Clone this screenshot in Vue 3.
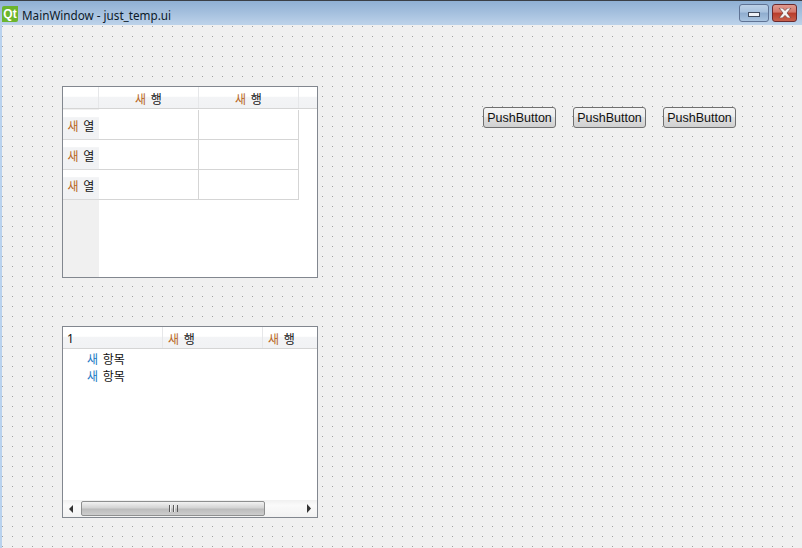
<template>
  <div class="window">
    <header class="titlebar">
      <div class="qt-logo">Qt</div>
      <span class="title">MainWindow - just_temp.ui</span>
      <div class="caption-buttons">
        <button class="cap cap-min"><i class="min-glyph"></i></button>
        <button class="cap cap-close">
          <svg width="14" height="10" viewBox="0 0 14 10">
            <path d="M1 0h3.500L7 2.600 9.500 0H13L9 5l4 5H9.500L7 7.400 4.500 10H1l4-5z" fill="#f4f4f4" stroke="#6b3a36" stroke-width="0.7" />
          </svg>
        </button>
      </div>
    </header>

    <main class="canvas">
      <!-- 表格 -->
      <section class="widget table-widget">
        <div class="hhead">
          <div class="corner"></div>
          <div v-for="c in columns" :key="c.id" class="hsec col"><b>새</b> 행</div>
          <div class="hsec fill"></div>
        </div>
        <div class="table-body">
          <div class="vhead">
            <div v-for="r in rows" :key="r" class="vsec"><b>새</b> 열</div>
          </div>
          <div class="cells">
            <div v-for="r in rows" :key="r" class="row">
              <div class="cell"></div>
              <div class="cell"></div>
            </div>
          </div>
        </div>
      </section>

      <!-- 树 -->
      <section class="widget tree-widget">
        <div class="hhead tree-head">
          <div class="hsec tree-first">1</div>
          <div class="hsec tree-col"><b>새</b> 행</div>
          <div class="hsec tree-last"><b>새</b> 행</div>
        </div>
        <div class="tree-items">
          <div v-for="n in 2" :key="n" class="tree-item"><b class="blue">새</b> 항목</div>
        </div>
        <div class="scrollbar">
          <div class="arrow-box arrow-left">
            <svg width="4" height="8" viewBox="0 0 4 8"><path d="M4 0v8L0 4z" fill="#333" /></svg>
          </div>
          <div class="thumb">
            <svg width="9" height="7" viewBox="0 0 9 7"><path d="M0 0h1v7H0zM4 0h1v7H4zM8 0h1v7H8z" fill="#5a5a5a" /><path d="M1 0h1v7H1zM5 0h1v7H5z" fill="#eeeeee" /></svg>
          </div>
          <div class="track"></div>
          <div class="arrow-box">
            <svg width="5" height="9" viewBox="0 0 5 9"><path d="M1 0v9l4-4.500z" fill="#333" /></svg>
          </div>
        </div>
      </section>

      <div class="buttons">
        <button v-for="b in 3" :key="b" class="push">PushButton</button>
      </div>
    </main>
  </div>
</template>

<script setup>
const columns = [{ id: 1 }, { id: 2 }];
const rows = [1, 2, 3];
</script>

<style>
html, body { margin: 0; overflow: hidden; }
</style>

<style scoped>
.window {
  width: 802px;
  height: 548px;
  display: flex;
  flex-direction: column;
  overflow: hidden;
  font-family: "Noto Sans CJK KR", "Noto Sans", sans-serif;
  font-size: 12px;
  word-spacing: 2px;
  color: #111;
}

.titlebar {
  height: 25px;
  flex: none;
  box-sizing: border-box;
  border-top: 1px solid #3a3f46;
  padding-left: 2px;
  display: flex;
  align-items: center;
  background: linear-gradient(#8fb0d4, #a5c0de 50%, #bdd3ea);
}
.qt-logo {
  width: 16px;
  height: 16px;
  margin-top: 1px;
  border-radius: 2px 0 2px 0;
  background: #6cb52d;
  color: #fff;
  font: bold 12px/16px "Liberation Sans", sans-serif;
  text-align: center;
}
.title {
  margin-left: 4px;
  margin-top: 3px;
  font: 11.7px/16px "Noto Sans", sans-serif;
  word-spacing: 0;
  color: #0c1a2a;
}
.caption-buttons {
  margin-left: auto;
  margin-right: 5px;
  margin-top: -1px;
  display: flex;
  gap: 3px;
}
.cap {
  padding: 0;
  height: 18px;
  border-radius: 3px;
  display: flex;
  align-items: center;
  justify-content: center;
}
.cap-min {
  width: 30px;
  border: 1px solid #5f7394;
  background: linear-gradient(#bcd0e6, #a8c2de 45%, #8eacce 50%, #a9c4e0);
}
.min-glyph {
  display: block;
  width: 10px;
  height: 3px;
  margin-top: 4px;
  background: #eef2f7;
  border: 1px solid #3f4a5c;
}
.cap-close {
  width: 25px;
  border: 1px solid #6a2a2e;
  background: linear-gradient(#e09a8e, #d4766a 45%, #b83c2a 50%, #c8604c);
}

.canvas {
  position: relative;
  flex: 1;
  border-left: 2px solid #b9d2ee;
  background-color: #f0f0f0;
  background-image: conic-gradient(from 270deg at 1px 1px, #a0a0a0 90deg, transparent 0);
  background-size: 10px 10px;
  background-position: 0 1px;
}

/* designer form: widgets sit on a free canvas */
.widget {
  position: absolute;
  left: 60px;
  width: 256px;
  height: 192px;
  box-sizing: border-box;
  border: 1px solid #82878f;
  background: #fff;
  display: flex;
  flex-direction: column;
}
.table-widget { top: 61px; }
.tree-widget { top: 301px; }

.hhead {
  display: flex;
  height: 22px;
  flex: none;
  box-sizing: border-box;
  border-bottom: 1px solid #d5d5d5;
  background: linear-gradient(#fff 45%, #f3f4f6 46%, #f1f2f4);
}
.hsec {
  box-sizing: border-box;
  border-right: 1px solid #e6e7e9;
  text-align: center;
  line-height: 23px;
}
.hsec b, .vsec b, .tree-item b {
  font-weight: 400;
  color: #b8661c;
}
.tree-item b.blue { color: #1c78c4; }
.corner {
  width: 36px;
  border-right: 1px solid #e6e7e9;
  box-sizing: border-box;
}
.col { width: 100px; }
.fill { flex: 1; border-right: 0; }

.table-body { flex: 1; display: flex; min-height: 0; }
.vhead {
  width: 36px;
  box-sizing: border-box;
  background: #f0f0f0;
  padding-top: 1px;
}
.vsec {
  height: 30px;
  box-sizing: border-box;
  border-bottom: 1px solid #d9d9d9;
  line-height: 32px;
  text-align: center;
  background: linear-gradient(#fff 25%, #f2f3f5 26%, #f1f2f4);
}
.cells { padding-top: 1px; }
.row { display: flex; }
.cell {
  width: 100px;
  height: 30px;
  box-sizing: border-box;
  border-right: 1px solid #d5d5d5;
  border-bottom: 1px solid #d5d5d5;
}

.tree-first { width: 100px; text-align: left; padding-left: 4px; font: 12px/24px "Noto Sans", sans-serif; }
.tree-col { width: 100px; text-align: left; padding-left: 5px; }
.tree-last { flex: 1; border-right: 0; text-align: left; padding-left: 5px; }
.tree-items { flex: 1; padding: 1px 0 0 24px; }
.tree-item { height: 17px; line-height: 17px; }

.scrollbar {
  flex: none;
  height: 17px;
  display: flex;
  background: linear-gradient(#f0f0f0, #fafafa 30%, #f2f2f2);
}
.arrow-box {
  width: 18px;
  flex: none;
  display: flex;
  align-items: center;
  justify-content: center;
}
.arrow-left { padding-right: 2px; box-sizing: border-box; }
.thumb {
  width: 184px;
  flex: none;
  box-sizing: border-box;
  margin-top: 1px;
  height: 15px;
  border: 1px solid #8e8f8f;
  border-radius: 2px;
  background: linear-gradient(#f2f2f2, #d4d4d4 45%, #bcbcbc 55%, #cdcdcd);
  display: flex;
  align-items: center;
  justify-content: center;
}
.track { flex: 1; }

.buttons {
  position: absolute;
  left: 481px;
  top: 82px;
  display: flex;
  gap: 17px;
}
.push {
  width: 73px;
  height: 21px;
  padding: 1px 0 0;
  box-sizing: border-box;
  border: 1px solid #707070;
  border-radius: 3px;
  background: linear-gradient(#f4f4f4, #ededed 45%, #e0e0e0 50%, #d0d0d0);
  font: 12.5px/18px "Liberation Sans", sans-serif;
  word-spacing: 0;
  color: #111;
}
</style>
